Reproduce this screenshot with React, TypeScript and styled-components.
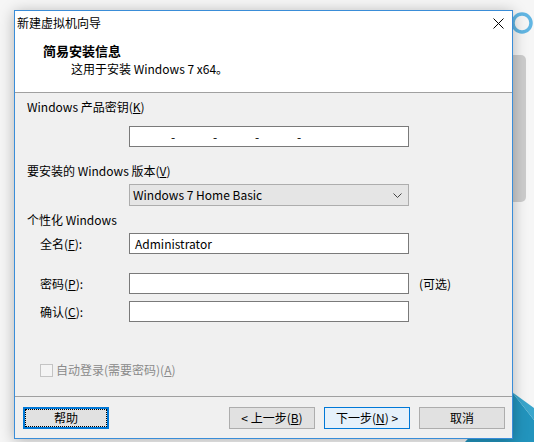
import styled, { createGlobalStyle } from "styled-components";

const GlobalStyle = createGlobalStyle`
  body {
    margin: 0;
    background: #f6f6f6;
    font-family: "Noto Sans CJK SC", "Noto Sans", sans-serif;
    font-size: 12px;
    color: #000;
  }
`;

const Desktop = styled.div`
  position: relative;
  width: 534px;
  height: 442px;
  overflow: hidden;
  background: #f6f6f6;
  padding: 10px 0 0 14px;
  box-sizing: border-box;
`;

/* things lying on the desktop behind the dialog */
const Ring = styled.svg`
  position: absolute;
  left: 510px;
  top: 11px;
`;

const SideBar = styled.div`
  position: absolute;
  left: 500px;
  top: 55px;
  width: 26px;
  height: 147px;
  border-radius: 0 5px 5px 0;
  background: #cdcdcd;
`;

const Corner = styled.svg`
  position: absolute;
  left: 440px;
  top: 380px;
`;

const Window = styled.div`
  position: relative;
  z-index: 1;
  width: 499px;
  height: 429px;
  box-sizing: border-box;
  border: 1px solid #3a8dd8;
  background: #f0f0f0;
  box-shadow: 0 2px 14px rgba(0, 0, 0, 0.28);
  display: flex;
  flex-direction: column;
`;

const TitleBar = styled.div`
  height: 24px;
  display: flex;
  align-items: center;
  background: #fff;
  padding-left: 2px;
`;

const TitleText = styled.span`
  flex: 1;
  line-height: 16px;
`;

const CloseBox = styled.div`
  width: 28px;
  height: 24px;
  display: flex;
  align-items: center;
  justify-content: center;
`;

const Header = styled.div`
  height: 58px;
  box-sizing: border-box;
  background: #fff;
  padding: 8px 0 0 28px;
  border-bottom: 1px solid #a0a0a0;
`;

const HeaderTitle = styled.div`
  font-weight: bold;
  font-size: 13px;
  line-height: 16px;
`;

const HeaderSub = styled.div`
  margin: 2px 0 0 28px;
  line-height: 16px;
`;

const Body = styled.div`
  flex: 1;
  display: flex;
  flex-direction: column;
  padding: 0 12px;
  border-bottom: 1px solid #a0a0a0;
`;

const Label = styled.div<{ $top: number }>`
  margin-top: ${(p) => p.$top}px;
  line-height: 16px;
`;

const Key = styled.u`
  text-decoration: underline;
  text-underline-offset: 1px;
`;

const TextBox = styled.div`
  box-sizing: border-box;
  width: 280px;
  height: 21px;
  border: 1px solid #7a7a7a;
  background: #fff;
  display: flex;
  align-items: center;
  padding-left: 5px;
  line-height: 16px;
`;

const KeyBox = styled(TextBox)`
  margin: 11px 0 0 102px;
  padding-left: 41px;
  gap: 38px;
`;

const Dash = styled.span`
  width: 4px;
  text-align: center;
`;

const Select = styled.div`
  box-sizing: border-box;
  width: 280px;
  height: 22px;
  margin: 5px 0 0 102px;
  border: 1px solid #adadad;
  background: #e5e5e5;
  display: flex;
  align-items: center;
  justify-content: space-between;
  padding: 0 6px 0 3px;
  line-height: 16px;
`;

const FieldRow = styled.div<{ $top: number }>`
  margin-top: ${(p) => p.$top}px;
  padding-left: 13px;
  display: grid;
  grid-template-columns: 89px 280px auto;
  align-items: center;
  line-height: 16px;
`;

const Hint = styled.span`
  margin-left: 10px;
`;

const CheckRow = styled.label`
  margin-top: 40px;
  padding-left: 13px;
  display: flex;
  align-items: center;
  gap: 3px;
  line-height: 16px;
  color: #8a8a8a;
`;

const CheckBox = styled.span`
  width: 13px;
  height: 13px;
  box-sizing: border-box;
  border: 1px solid #c4c4c4;
  background: #f4f4f4;
`;

const Footer = styled.div`
  height: 41px;
  box-sizing: border-box;
  padding: 10px 7px 0 8px;
  display: flex;
  align-items: flex-start;
`;

const ButtonGroup = styled.div`
  margin-left: auto;
  display: flex;
  gap: 9px;
`;

const Button = styled.button<{ $variant?: "focus" | "default" }>`
  position: relative;
  width: 86px;
  height: 22px;
  box-sizing: border-box;
  padding: 0;
  font: inherit;
  line-height: 16px;
  color: #000;
  border: 1px solid ${(p) => (p.$variant ? "#0078d7" : "#adadad")};
  background: ${(p) => (p.$variant === "default" ? "#e5f1fb" : "#e1e1e1")};
  box-shadow: ${(p) =>
    p.$variant === "focus" ? "inset 0 0 0 1px #0078d7" : "none"};
  &::after {
    content: "";
    display: ${(p) => (p.$variant === "focus" ? "block" : "none")};
    position: absolute;
    inset: 1px;
    border: 1px dotted #000;
  }
`;

const Chevron = () => (
  <svg width="9" height="5" viewBox="0 0 9 5">
    <polyline points="0.5,0.5 4.5,4.5 8.5,0.5" fill="none" stroke="#444" strokeWidth="1" />
  </svg>
);

export default function App() {
  return (
    <>
      <GlobalStyle />
      <Desktop>
        <Ring width="24" height="24" viewBox="0 0 24 24">
          <circle cx="12" cy="12" r="9" fill="none" stroke="#62b6e3" strokeWidth="3.5" />
        </Ring>
        <SideBar />
        <Corner width="94" height="62" viewBox="0 0 94 62">
          <polygon points="72,12 94,40 94,62 25,62" fill="#2294bd" />
          <polygon points="72,12 94,28 94,40" fill="#3aa6cc" />
        </Corner>

        <Window>
          <TitleBar>
            <TitleText>新建虚拟机向导</TitleText>
            <CloseBox>
              <svg width="11" height="11" viewBox="0 0 11 11">
                <path d="M0.5 0.5 L10.5 10.5 M10.5 0.5 L0.5 10.5" stroke="#000" strokeWidth="1" />
              </svg>
            </CloseBox>
          </TitleBar>

          <Header>
            <HeaderTitle>简易安装信息</HeaderTitle>
            <HeaderSub>这用于安装 Windows 7 x64。</HeaderSub>
          </Header>

          <Body>
            <Label $top={6}>
              Windows 产品密钥(<Key>K</Key>)
            </Label>
            <KeyBox>
              <Dash>-</Dash>
              <Dash>-</Dash>
              <Dash>-</Dash>
              <Dash>-</Dash>
            </KeyBox>

            <Label $top={16}>
              要安装的 Windows 版本(<Key>V</Key>)
            </Label>
            <Select>
              <span>Windows 7 Home Basic</span>
              <Chevron />
            </Select>

            <Label $top={6}>个性化 Windows</Label>
            <FieldRow $top={5}>
              <span>
                全名(<Key>F</Key>):
              </span>
              <TextBox>Administrator</TextBox>
            </FieldRow>
            <FieldRow $top={19}>
              <span>
                密码(<Key>P</Key>):
              </span>
              <TextBox />
              <Hint>(可选)</Hint>
            </FieldRow>
            <FieldRow $top={7}>
              <span>
                确认(<Key>C</Key>):
              </span>
              <TextBox />
            </FieldRow>

            <CheckRow>
              <CheckBox />
              <span>
                自动登录(需要密码)(<Key>A</Key>)
              </span>
            </CheckRow>
          </Body>

          <Footer>
            <Button $variant="focus">帮助</Button>
            <ButtonGroup>
              <Button>
                &lt; 上一步(<Key>B</Key>)
              </Button>
              <Button $variant="default">
                下一步(<Key>N</Key>) &gt;
              </Button>
              <Button>取消</Button>
            </ButtonGroup>
          </Footer>
        </Window>
      </Desktop>
    </>
  );
}
